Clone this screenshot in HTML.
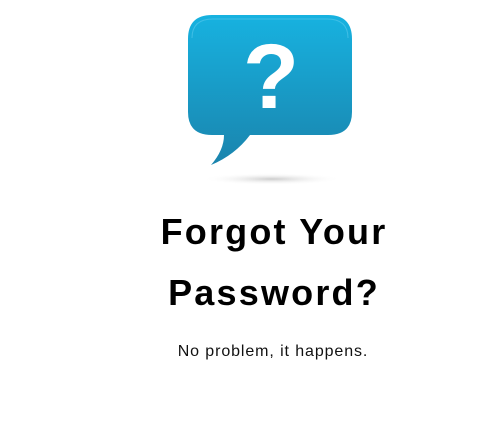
<!DOCTYPE html>
<html><head><style>
html,body{margin:0;padding:0;background:#fff;width:484px;height:441px;overflow:hidden;font-family:"Liberation Sans",sans-serif;}
.t{position:absolute;left:0;width:548px;text-align:center;color:#000;font-weight:bold;font-size:36px;letter-spacing:2.2px;line-height:1;}
.s{position:absolute;left:0;width:546px;text-align:center;font-size:16px;color:#111;letter-spacing:0.9px;line-height:1;}
</style></head><body>
<svg width="484" height="200" style="position:absolute;left:0;top:0">
<defs>
<linearGradient id="g" x1="0" y1="0" x2="0" y2="1">
<stop offset="0" stop-color="#17b2e0"/><stop offset="1" stop-color="#1a84ad"/>
</linearGradient>
<radialGradient id="sh"><stop offset="0" stop-color="#ccc"/><stop offset="1" stop-color="#fff" stop-opacity="0"/></radialGradient>
</defs>
<ellipse cx="272" cy="179" rx="70" ry="6" fill="url(#sh)"/>
<path d="M212,15 L328,15 Q352,15 352,39 L352,112 Q352,135 328,135 L250,135 Q235,155 211,165 Q224,150 224,135 L212,135 Q188,135 188,112 L188,39 Q188,15 212,15 Z" fill="url(#g)"/>
<path d="M192,38 Q192,19 213,19 L327,19 Q348,19 348,38" fill="none" stroke="#5ccaec" stroke-width="1" opacity="0.6"/>
<text x="271" y="108" text-anchor="middle" font-family="Liberation Sans" font-weight="bold" font-size="92" fill="#fff">?</text>
</svg>
<div class="t" style="top:214px">Forgot Your</div>
<div class="t" style="top:275px">Password?</div>
<div class="s" style="top:344px">No problem, it happens.</div>
</body></html>
